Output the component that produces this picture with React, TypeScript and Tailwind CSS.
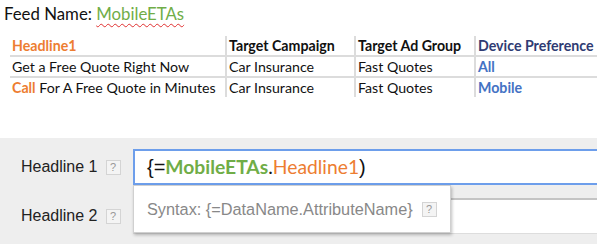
import React from "react";

const calibri = { fontFamily: "Lato, 'Open Sans', sans-serif" };

type Row = { headline: React.ReactNode; campaign: string; group: string; device: string };

const rows: Row[] = [
  { headline: "Get a Free Quote Right Now", campaign: "Car Insurance", group: "Fast Quotes", device: "All" },
  {
    headline: (
      <>
        <span className="font-bold text-[#ed7d31]">Call</span> For A Free Quote in Minutes
      </>
    ),
    campaign: "Car Insurance",
    group: "Fast Quotes",
    device: "Mobile",
  },
];

function HelpBox() {
  return (
    <span
      className="inline-flex h-[15px] w-[15px] items-center justify-center border border-[#d4d4d4] bg-[#f4f4f4] text-[11px] leading-none text-[#999]"
      style={{ fontFamily: "'Liberation Sans', Arial, sans-serif" }}
    >
      ?
    </span>
  );
}

export default function App() {
  return (
    <div className="w-[597px] h-[244px] overflow-hidden bg-white">
      {/* spreadsheet block */}
      <div className="h-[138px] bg-white" style={calibri}>
        <div className="pl-[4px] pt-[2px] text-[16.8px] leading-[24px] text-[#111]">
          Feed Name:{" "}
          <span className="text-[#70ad47] underline decoration-wavy decoration-[#e03030] decoration-1 underline-offset-[3px]">
            MobileETAs
          </span>
        </div>
        <div className="ml-[10px] mt-[10px] text-[14.2px] text-[#111]">
          <div className="flex h-[19px] items-center font-bold">
            <div className="w-[215px] pl-[2px] text-[#ed7d31]">Headline1</div>
            <div className="w-[129px] h-full border-l-2 border-[#dcdcdc] pl-[2px] flex items-center">Target Campaign</div>
            <div className="w-[120px] h-full border-l-2 border-[#dcdcdc] pl-[2px] flex items-center">Target Ad Group</div>
            <div className="flex-1 h-full border-l-2 border-[#dcdcdc] pl-[2px] flex items-center text-[#2f3b73]">
              Device Preference
            </div>
          </div>
          {rows.map((r, i) => (
            <div key={i} className="flex h-[21px] items-center border-t-2 border-[#dcdcdc]">
              <div className="w-[215px] pl-[2px]">{r.headline}</div>
              <div className="w-[129px] h-full border-l-2 border-[#dcdcdc] pl-[2px] flex items-center">{r.campaign}</div>
              <div className="w-[120px] h-full border-l-2 border-[#dcdcdc] pl-[2px] flex items-center">{r.group}</div>
              <div className="flex-1 h-full border-l-2 border-[#dcdcdc] pl-[2px] flex items-center font-bold text-[#4472c4]">
                {r.device}
              </div>
            </div>
          ))}
        </div>
      </div>

      {/* ad editor form */}
      <div
        className="relative h-[106px] bg-[#eeeeee] pt-[11px]"
        style={{ fontFamily: "'Liberation Sans', Arial, sans-serif" }}
      >
        <div className="flex h-[36px] items-center">
          <div className="flex w-[133px] items-center pl-[21px] gap-[8px]">
            <span className="text-[16px] text-[#222]">Headline 1</span>
            <HelpBox />
          </div>
          <div className="flex h-full flex-1 items-center border-2 border-r-0 border-[#6d9eeb] bg-white pl-[12px] text-[20px]">
            <span className="text-[#111]">{"{="}</span>
            <span className="font-bold text-[#70ad47] text-[19.3px]" style={calibri}>
              MobileETAs
            </span>
            <span className="text-[#111] text-[19.3px]" style={calibri}>
              .
            </span>
            <span className="text-[#ed7d31] text-[19.3px]" style={calibri}>
              Headline1
            </span>
            <span className="text-[#111]">)</span>
          </div>
        </div>
        <div className="mt-[13px] flex h-[36px] items-center">
          <div className="flex w-[133px] items-center pl-[21px] gap-[8px]">
            <span className="text-[16px] text-[#222]">Headline 2</span>
            <HelpBox />
          </div>
          <div className="h-full flex-1 border-t-2 border-b border-[#c4c4c4] border-b-[#dddddd] bg-white" />
        </div>

        {/* syntax hint popup */}
        <div className="absolute left-[133px] top-[47px] flex h-[48px] w-[318px] items-center gap-[9px] border border-[#d0d0d0] bg-white pl-[13px] shadow-[1px_2px_3px_rgba(0,0,0,0.25)]">
          <span className="text-[16.3px] text-[#888]">Syntax: {"{=DataName.AttributeName}"}</span>
          <HelpBox />
        </div>
      </div>
    </div>
  );
}
